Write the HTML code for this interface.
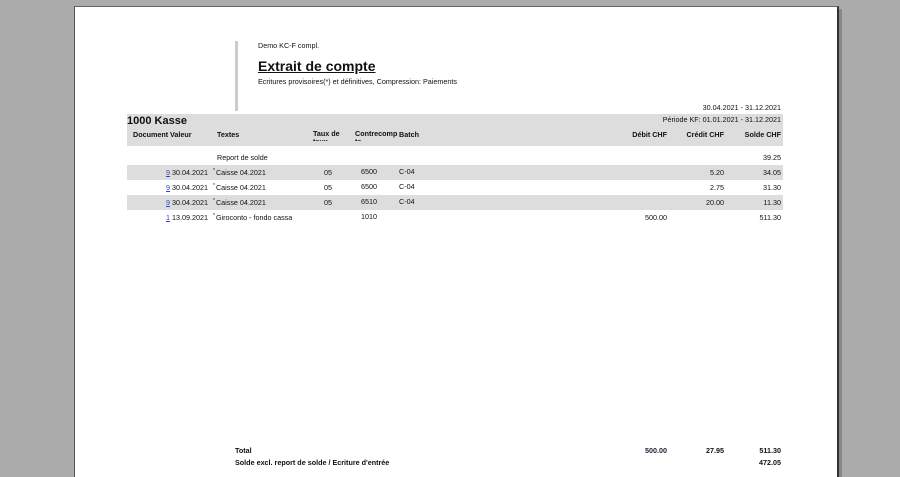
<!DOCTYPE html>
<html><head><style>
body{margin:0;width:900px;height:467px;background:#ababab;position:relative;overflow:hidden;font-family:"Liberation Sans",sans-serif;color:#111}
.page{position:absolute;left:74px;top:6px;width:762px;height:470px;background:#fff;border-top:1px solid #666;border-left:1px solid #555;border-right:2px solid #333;box-shadow:3px 3px 0 #888}
.a{position:absolute;font-size:7.2px;white-space:nowrap;line-height:9px}
.b{font-weight:bold}
.r{text-align:right}
.g{position:absolute;left:127px;width:656px;background:#ddd}
a{color:#3344cc !important;text-decoration:underline}
.s{font-size:5px;position:relative;top:-3px;margin-right:1px}
</style></head><body>
<div class="page"></div>
<div style="position:absolute;left:235px;top:41px;width:3px;height:70px;background:#ccc"></div>
<div class="a" style="left:258px;top:41px">Demo KC-F compl.</div>
<div class="a b" style="left:258px;top:58px;font-size:14px;line-height:16px;text-decoration:underline">Extrait de compte</div>
<div class="a" style="left:258px;top:77px">Ecritures provisoires(*) et définitives, Compression: Paiements</div>
<div class="a r" style="right:119px;top:103px">30.04.2021 - 31.12.2021</div>
<div class="g" style="top:114px;height:32px"></div>
<div class="a b" style="left:127px;top:115px;font-size:11px;line-height:12px">1000 Kasse</div>
<div class="a r" style="right:119px;top:115px">Période KF: 01.01.2021 - 31.12.2021</div>
<div style="position:absolute;top:130px;left:0;width:900px;height:11px;overflow:hidden">
<div class="a b" style="left:133px;top:0">Document</div>
<div class="a b" style="left:170px;top:0">Valeur</div>
<div class="a b" style="left:217px;top:0">Textes</div>
<div class="a b" style="left:313px;top:0;line-height:8px">Taux de<br>taux</div>
<div class="a b" style="left:355px;top:0;line-height:8px">Contrecomp<br>te</div>
<div class="a b" style="left:399px;top:0">Batch</div>
<div class="a b r" style="right:233px;top:0">Débit CHF</div>
<div class="a b r" style="right:176px;top:0">Crédit CHF</div>
<div class="a b r" style="right:119px;top:0">Solde CHF</div>
</div>
<div class="a" style="left:217px;top:153px">Report de solde</div>
<div class="a r" style="right:119px;top:153px">39.25</div>
<div class="g" style="top:165px;height:15px"></div>
<div class="g" style="top:195px;height:15px"></div>
<div class="a r" style="right:692px;top:168px"><a>9</a> 30.04.2021</div>
<div class="a" style="left:213px;top:168px"><span class="s">*</span>Caisse 04.2021</div>
<div class="a" style="left:324px;top:168px">05</div><div class="a" style="left:361px;top:167px">6500</div><div class="a" style="left:399px;top:167px">C-04</div>
<div class="a r" style="right:176px;top:168px">5.20</div><div class="a r" style="right:119px;top:168px">34.05</div>
<div class="a r" style="right:692px;top:183px"><a>9</a> 30.04.2021</div>
<div class="a" style="left:213px;top:183px"><span class="s">*</span>Caisse 04.2021</div>
<div class="a" style="left:324px;top:183px">05</div><div class="a" style="left:361px;top:182px">6500</div><div class="a" style="left:399px;top:182px">C-04</div>
<div class="a r" style="right:176px;top:183px">2.75</div><div class="a r" style="right:119px;top:183px">31.30</div>
<div class="a r" style="right:692px;top:198px"><a>9</a> 30.04.2021</div>
<div class="a" style="left:213px;top:198px"><span class="s">*</span>Caisse 04.2021</div>
<div class="a" style="left:324px;top:198px">05</div><div class="a" style="left:361px;top:197px">6510</div><div class="a" style="left:399px;top:197px">C-04</div>
<div class="a r" style="right:176px;top:198px">20.00</div><div class="a r" style="right:119px;top:198px">11.30</div>
<div class="a r" style="right:692px;top:213px"><a>1</a> 13.09.2021</div>
<div class="a" style="left:213px;top:213px"><span class="s">*</span>Giroconto - fondo cassa</div>
<div class="a" style="left:361px;top:212px">1010</div>
<div class="a r" style="right:233px;top:213px">500.00</div><div class="a r" style="right:119px;top:213px">511.30</div>
<div class="a b" style="left:235px;top:446px">Total</div>
<div class="a b r" style="right:233px;top:446px;color:#223">500.00</div>
<div class="a b r" style="right:176px;top:446px">27.95</div>
<div class="a b r" style="right:119px;top:446px">511.30</div>
<div class="a b" style="left:235px;top:458px">Solde excl. report de solde / Ecriture d'entrée</div>
<div class="a b r" style="right:119px;top:458px">472.05</div>
</body></html>
